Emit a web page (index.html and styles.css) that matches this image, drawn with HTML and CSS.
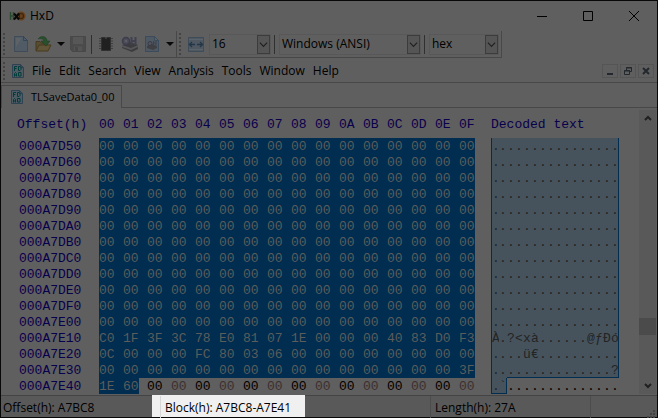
FILE: index.html
```html
<!DOCTYPE html>
<html lang="en">
<head>
  <meta charset="UTF-8" />
  <meta name="viewport" content="width=device-width, initial-scale=1.0"/>
  <title>HxD</title>
  <link rel="stylesheet" href="styles.css">
</head>
<body>

  <!-- Shared icons -->
  <svg class="sprite" aria-hidden="true">
    <symbol id="doc" viewBox="0 0 12 14">
      <path d="M.5.5h8l3 3v10H.5z" fill="#4f5b63" stroke="#2f4254"/>
      <path d="M8.500.5v3h3z" fill="#344b66" stroke="#2f4254"/>
      <path d="M2.500 7V2.500H5M2.500 4.500h2M6.500 2.500v4h1.500l1-1v-2l-1-1zM2.500 12.500v-3l1-1 1 1v3M2.500 11h2M6.500 8.500h2.500v3.500H6.500z" fill="none" stroke="#003c38"/>
    </symbol>
    <symbol id="chevron" viewBox="0 0 10 6">
      <path d="M1 1l4 4 4-4" fill="none" stroke="#202020" stroke-width="1.300"/>
    </symbol>
    <symbol id="drop" viewBox="0 0 8 4">
      <path d="M0 0h8L4 4z" fill="#090909"/>
    </symbol>
  </svg>

  <div class="window">
    <header class="titlebar">
      <svg class="logo" viewBox="0 0 17 12" aria-hidden="true">
        <circle cx="12" cy="6" r="4.500" fill="#66401c"/>
        <path d="M10.500 3.500h1.500a2.500 2.500 0 0 1 0 5h-1.500z" fill="none" stroke="#3d240d" stroke-width="1.200"/>
        <path d="M1.500 2v8M4.500 2v8M1.500 6h3" fill="none" stroke="#284b30" stroke-width="1.400"/>
        <path d="M5 3.500l5 6M10 3.500l-5 6" stroke="#080808" stroke-width="2"/>
      </svg>
      <h1>HxD</h1>
      <div class="window-buttons">
        <button aria-label="Minimize"><svg viewBox="0 0 10 10"><path d="M0 5.500h10" stroke="#000"/></svg></button>
        <button aria-label="Maximize"><svg viewBox="0 0 10 10"><path d="M.5.5h9v9h-9z" fill="none" stroke="#000"/></svg></button>
        <button aria-label="Close"><svg viewBox="0 0 10 10"><path d="M0 0l10 10M10 0L0 10" stroke="#000"/></svg></button>
      </div>
    </header>

    <!-- Toolbar -->
    <div class="toolbars">
      <div class="toolbar files">
        <span class="grip"></span>
        <button class="tool new" aria-label="New">
          <svg width="14" height="16" viewBox="0 0 14 16"><path d="M.5.5h9l4 4v11H.5z" fill="#505b65" stroke="#3f4b58"/><path d="M2 2h6l-6 9z" fill="#5c6266"/><path d="M9.500.5v4h4z" fill="#4c5c6c" stroke="#344657"/></svg>
        </button>
        <button class="tool open" aria-label="Open">
          <svg width="17" height="16" viewBox="0 0 17 16"><path d="M1 14.500V5.500h4l1 1.500h6v7.500z" fill="#574d33" stroke="#483a1c"/><path d="M1 15l3-6h12l-3 6z" fill="#615539" stroke="#483a1c"/><path d="M3 3C6-1 12 0 12 5h3l-4 5-5-5h3C9 3 6 2 3 3z" fill="#28502c" stroke="#1d3d21" stroke-width=".5"/></svg>
        </button>
        <button class="drop" aria-label="Recent files"><svg width="8" height="4"><use href="#drop"/></svg></button>
        <button class="tool save" aria-label="Save" disabled>
          <svg width="16" height="16" viewBox="0 0 16 16"><path d="M.5.5h15v15H2.500l-2-2z" fill="#4b4b4b" stroke="#484848"/><path d="M3 1h10v7H3z" fill="#575757"/><path d="M4 10.500h8V15H4z" fill="#555"/><path d="M5 11h3v4H5z" fill="#484848"/></svg>
        </button>
        <span class="divider"></span>
        <button class="tool ram" aria-label="Open main memory">
          <svg width="14" height="14" viewBox="0 0 14 14"><path d="M0 1.500h14M0 4h14M0 6.500h14M0 9h14M0 11.500h14" stroke="#3e3e3e"/><path d="M2.500.5h9v13h-9z" fill="#202020" stroke="#303030"/><path d="M6 1h2" stroke="#505050"/></svg>
        </button>
        <button class="tool disk" aria-label="Open disk">
          <svg width="17" height="16" viewBox="0 0 17 16"><path d="M1 9l8-3 8 3v4l-6 3-10-4z" fill="#3c3c3e"/><path d="M1 9l9 3 7-3v2l-7 3-9-3z" fill="#55555a"/><circle cx="5" cy="5" r="3.500" fill="#4d4d59" stroke="#3c3c4c" stroke-width="1.500"/><path d="M10.500 1v8M14.500 1v8M10.500 5h4" stroke="#404050" stroke-width="2"/><circle cx="5" cy="5" r="1" fill="#606068"/></svg>
        </button>
        <button class="tool image" aria-label="Open disk image">
          <svg width="14" height="16" viewBox="0 0 14 16"><path d="M.5.5h9l4 4v11H.5z" fill="#4e5963" stroke="#3b4b5c"/><path d="M9.500.5v4h4z" fill="#5b636b" stroke="#3b4b5c"/><path d="M2 10l5-2 5 2v2l-4 2-6-2z" fill="#404044"/><circle cx="5" cy="7.500" r="2" fill="#55555e" stroke="#3a3a48"/><path d="M8.500 5v4M11 5v4M8.500 7H11" stroke="#404050"/></svg>
        </button>
        <button class="drop" aria-label="Disk options"><svg width="8" height="4"><use href="#drop"/></svg></button>
      </div>
      <div class="toolbar view">
        <span class="grip"></span>
        <label class="width-icon" for="columns" aria-label="Bytes per row">
          <svg width="16" height="15" viewBox="0 0 16 15"><path d="M.5.5h15v14H.5z" fill="#4f5860" stroke="#3e4b58"/><path d="M1 2.500h14M1 12.500h14" stroke="#5a636a"/><path d="M1 7.500h6M4 5L1.500 7.500 4 10M9 7.500h6M12 5l2.500 2.500L12 10" fill="none" stroke="#22364a" stroke-width="1.300"/></svg>
        </label>
        <div class="combo columns">
          <select id="columns"><option>16</option><option>8</option></select>
          <svg><use href="#chevron"/></svg>
        </div>
        <span class="divider"></span>
        <div class="combo charset">
          <select aria-label="Character set"><option>Windows (ANSI)</option><option>DOS/IBM-ASCII</option></select>
          <svg><use href="#chevron"/></svg>
        </div>
        <span class="divider"></span>
        <div class="combo base">
          <select aria-label="Offset base"><option>hex</option><option>dec</option></select>
          <svg><use href="#chevron"/></svg>
        </div>
      </div>
    </div>

    <!-- Menu -->
    <nav class="menubar">
      <span class="grip"></span>
      <svg class="doc"><use href="#doc"/></svg>
      <button>File</button>
      <button>Edit</button>
      <button>Search</button>
      <button>View</button>
      <button>Analysis</button>
      <button>Tools</button>
      <button>Window</button>
      <button>Help</button>
      <div class="child-buttons">
        <button aria-label="Minimize file"><svg viewBox="0 0 10 10"><path d="M2 8h6" stroke="#22282d" stroke-width="2"/></svg></button>
        <button aria-label="Restore file"><svg viewBox="0 0 10 10"><path d="M3.500 4V1.500h5v4H7M3 2h6M1.500 4.500h5v4h-5zM1 5h6" fill="none" stroke="#22282d"/></svg></button>
        <button aria-label="Close file"><svg viewBox="0 0 10 10"><path d="M2 2l6 6M8 2L2 8" stroke="#22282d" stroke-width="2"/></svg></button>
      </div>
    </nav>

    <div class="tabs">
      <button class="tab"><svg class="doc"><use href="#doc"/></svg>TLSaveData0_00</button>
    </div>

    <!-- Hex view -->
    <main class="editor">
      <table class="hex">
        <thead>
          <tr id="hex-head"></tr>
        </thead>
        <tbody id="hex-body"></tbody>
      </table>
      <div class="scrollbar">
        <svg viewBox="0 0 8 6"><path d="M1 5l3-3 3 3" fill="none" stroke="#202020" stroke-width="2"/></svg>
        <div class="track"><div class="thumb"></div></div>
        <svg viewBox="0 0 8 6"><path d="M1 1l3 3 3-3" fill="none" stroke="#202020" stroke-width="2"/></svg>
      </div>
    </main>

    <footer class="statusbar">
      <span class="pane">Offset(h): A7BC8</span>
      <span class="pane block">Block(h): A7BC8-A7E41</span>
      <span class="pane">Length(h): 27A</span>
      <svg class="resize" viewBox="0 0 8 8"><path d="M6 0h2v2H6zM3 3h2v2H3zM6 3h2v2H6zM0 6h2v2H0zM3 6h2v2H3zM6 6h2v2H6z" fill="#444"/></svg>
    </footer>
  </div>

  <script>
    const start = 0xA7D50;
    const selectionEnd = 0xA7E41;
    const rowCount = 16;

    const blank = { bytes: Array(16).fill("00"), text: "................" };
    const rows = {
      0xA7E10: { bytes: "C0 1F 3F 3C 78 E0 81 07 1E 00 00 00 40 83 D0 F3".split(" "), text: "À.?<xà......@ƒÐó" },
      0xA7E20: { bytes: "0C 00 00 00 FC 80 03 06 00 00 00 00 00 00 00 00".split(" "), text: "....ü€.........." },
      0xA7E30: { bytes: "00 00 00 00 00 00 00 00 00 00 00 00 00 00 00 3F".split(" "), text: "...............?" },
      0xA7E40: { bytes: "1E 60 00 00 00 00 00 00 00 00 00 00 00 00 00 00".split(" "), text: ".`.............." },
    };

    function hex(value, length) {
      return value.toString(16).toUpperCase().padStart(length, "0");
    }

    function addCell(row, tag, text, className) {
      const cell = document.createElement(tag);
      cell.textContent = text;
      cell.className = className;
      row.appendChild(cell);
      return cell;
    }

    const head = document.getElementById("hex-head");
    addCell(head, "th", "Offset(h)", "offset");
    for (let i = 0; i < 16; i++) {
      addCell(head, "th", hex(i, 2), "byte");
    }
    addCell(head, "th", "Decoded text", "decoded");

    const body = document.getElementById("hex-body");
    for (let r = 0; r < rowCount; r++) {
      const address = start + r * 16;
      const data = rows[address] || blank;
      const row = document.createElement("tr");
      addCell(row, "th", hex(address, 8), "offset");

      data.bytes.forEach((byte, i) => {
        const position = address + i;
        let className = "byte";
        if (position <= selectionEnd) className += " selected";
        // the gap after the last selected byte stays unpainted
        if (position === selectionEnd || (i === 15 && position < selectionEnd)) className += " last";
        addCell(row, "td", byte, className);
      });

      const decoded = addCell(row, "td", "", "decoded");
      const chars = document.createElement("div");
      chars.className = "chars";
      [...data.text].forEach((char, i) => {
        const position = address + i;
        const classes = [];
        if (position <= selectionEnd) {
          classes.push("selected");
          if (i === 0) classes.push("edge-left");
          if (i === 15 || position === selectionEnd) classes.push("edge-right");
          if (position + 16 > selectionEnd) classes.push("edge-bottom");
        }
        addCell(chars, "span", char, classes.join(" "));
      });
      decoded.appendChild(chars);
      body.appendChild(row);
    }
  </script>

</body>
</html>
```
FILE: styles.css
```css
* {
  box-sizing: border-box;
}

body {
  margin: 0;
  background: #5f5f5f;
  color: #000;
  font-family: "Open Sans", "Noto Sans", sans-serif;
  font-size: 12px;
  line-height: 16px;
}

button, select {
  font: inherit;
  color: inherit;
  background: none;
  border: 0;
  padding: 0;
  margin: 0;
}

svg {
  display: block;
  flex: none;
}

.sprite {
  position: absolute;
  width: 0;
  height: 0;
}

.window {
  display: flex;
  flex-direction: column;
  min-height: 100vh;
  border: 1px solid #080808;
}

/* Title bar */
.titlebar {
  display: flex;
  align-items: center;
  height: 30px;
  padding-left: 8px;
}

.logo {
  width: 17px;
  height: 12px;
}

h1 {
  margin: 0 auto 0 4px;
  font-size: 12px;
  font-weight: normal;
}

.window-buttons {
  display: flex;
}

.window-buttons button {
  display: flex;
  align-items: center;
  justify-content: center;
  width: 46px;
  height: 30px;
}

.window-buttons svg {
  width: 10px;
  height: 10px;
}

/* Toolbars */
.toolbars {
  display: flex;
  height: 27px;
}

.toolbar {
  display: flex;
  align-items: center;
  border-right: 1px solid #484848;
  border-bottom: 1px solid #484848;
}

.grip {
  width: 2px;
  height: 22px;
  margin-left: 2px;
  background: repeating-linear-gradient(#444 0 2px, transparent 2px 4px);
}

.tool {
  display: flex;
  justify-content: center;
  width: 18px;
}

.files {
  width: 176px;
}

.new {
  margin-left: 7px;
}

.open {
  margin-left: 4px;
}

.drop {
  margin-left: 5px;
}

.save {
  margin-left: 4px;
}

.divider {
  width: 1px;
  height: 19px;
  background: #303030;
}

.files .divider {
  margin: 0 5px 0 4px;
}

.disk, .image {
  margin-left: 5px;
}

.width-icon {
  margin: 0 5px 0 7px;
}

.view {
  padding-right: 2px;
}

.combo {
  position: relative;
  height: 21px;
  border: 1px solid #585858;
}

.combo select {
  appearance: none;
  width: 100%;
  height: 19px;
  padding: 0 16px 0 2px;
}

.combo svg {
  position: absolute;
  top: 0;
  right: 0;
  width: 13px;
  height: 19px;
  padding: 0 1px;
  background: #555;
  border: 1px solid #3c3c3c;
  pointer-events: none;
}

.view .divider {
  margin: 0 4px 0 3px;
}

.columns {
  width: 62px;
}

.charset {
  width: 142px;
}

.base {
  width: 70px;
}

/* Menu */
.menubar {
  display: flex;
  align-items: center;
  gap: 8px;
  height: 25px;
  padding-top: 1px;
  border-bottom: 1px solid #484848;
}

.menubar .grip {
  height: 18px;
  margin-right: -1px;
}

.doc {
  width: 12px;
  height: 14px;
}

.child-buttons {
  display: flex;
  gap: 2px;
  margin: 0 3px 0 auto;
}

.child-buttons button {
  padding: 1px 2px;
  border: 1px solid #555;
}

.child-buttons svg {
  width: 10px;
  height: 10px;
}

/* Tabs */
.tabs {
  display: flex;
  height: 25px;
  padding-top: 2px;
  border-bottom: 1px solid #484848;
}

.tab {
  display: flex;
  align-items: center;
  gap: 8px;
  height: 23px;
  padding: 0 7px 0 9px;
  background: #5f5f5f;
  border: 1px solid #484848;
  border-bottom: 0;
  font-size: 11px;
}

/* Hex view */
.editor {
  display: flex;
  flex: 1;
  justify-content: space-between;
}

.hex {
  table-layout: fixed;
  border-collapse: collapse;
  width: 618px;
  margin-bottom: auto;
  font-family: "Liberation Mono", monospace;
  font-size: 13px;
  line-height: 15px;
}

.hex th, .hex td {
  padding: 1px 0 0;
}

.hex th {
  font-weight: normal;
  text-align: left;
  color: #08004c;
}

.hex thead th {
  height: 30px;
  padding-top: 3px;
}

.hex .offset {
  width: 98px;
  padding-left: 18px;
}

.hex thead .offset {
  padding-left: 16px;
}

.hex .byte {
  width: 24px;
}

.hex td.byte:nth-child(odd) {
  color: #3c3030;
}

.hex td.byte.selected {
  background: #002d50;
  color: #5c5c5c;
}

.hex td.byte.last {
  background: linear-gradient(to right, #002d50 16px, transparent 16px);
}

.hex .decoded {
  padding-left: 8px;
}

.hex td.decoded {
  padding-top: 0;
}

.chars {
  display: flex;
}

.chars span {
  width: 8px;
  height: 16px;
  padding-top: 1px;
  border: 0 solid #002d50;
}

.chars .selected {
  background: #46535d;
  color: #242424;
}

.chars .edge-left {
  border-left-width: 1px;
}

.chars .edge-right {
  border-right-width: 1px;
}

.chars .edge-bottom {
  border-bottom-width: 1px;
}

.scrollbar {
  display: flex;
  flex-direction: column;
  align-items: center;
  width: 17px;
  margin: 2px 1px 1px 0;
  padding: 5px 0;
  background: #595959;
}

.scrollbar svg {
  width: 8px;
  height: 6px;
}

.track {
  display: flex;
  flex: 1;
  flex-direction: column;
  justify-content: flex-end;
  width: 100%;
  padding-bottom: 48px;
}

.thumb {
  height: 17px;
  background: #4b4b4b;
}

/* Status bar */
.statusbar {
  position: relative;
  isolation: isolate;
  display: grid;
  grid-template-columns: 160px 270px 160px 1fr;
  height: 22px;
  background: #595959;
  border-top: 1px solid #444;
}

.pane {
  padding: 4px 2px;
  border-right: 1px solid #4c4c4c;
}

.pane:first-child {
  border-right-color: #d7d7d7;
}

.pane + .pane {
  padding-left: 4px;
}

.block::before {
  content: "";
  position: absolute;
  top: -1px;
  bottom: 0;
  left: 151px;
  width: 153px;
  background: #f0f0f0;
  z-index: -1;
}

.resize {
  align-self: end;
  justify-self: end;
  width: 8px;
  height: 8px;
  margin: 0 2px 2px 0;
}
```
